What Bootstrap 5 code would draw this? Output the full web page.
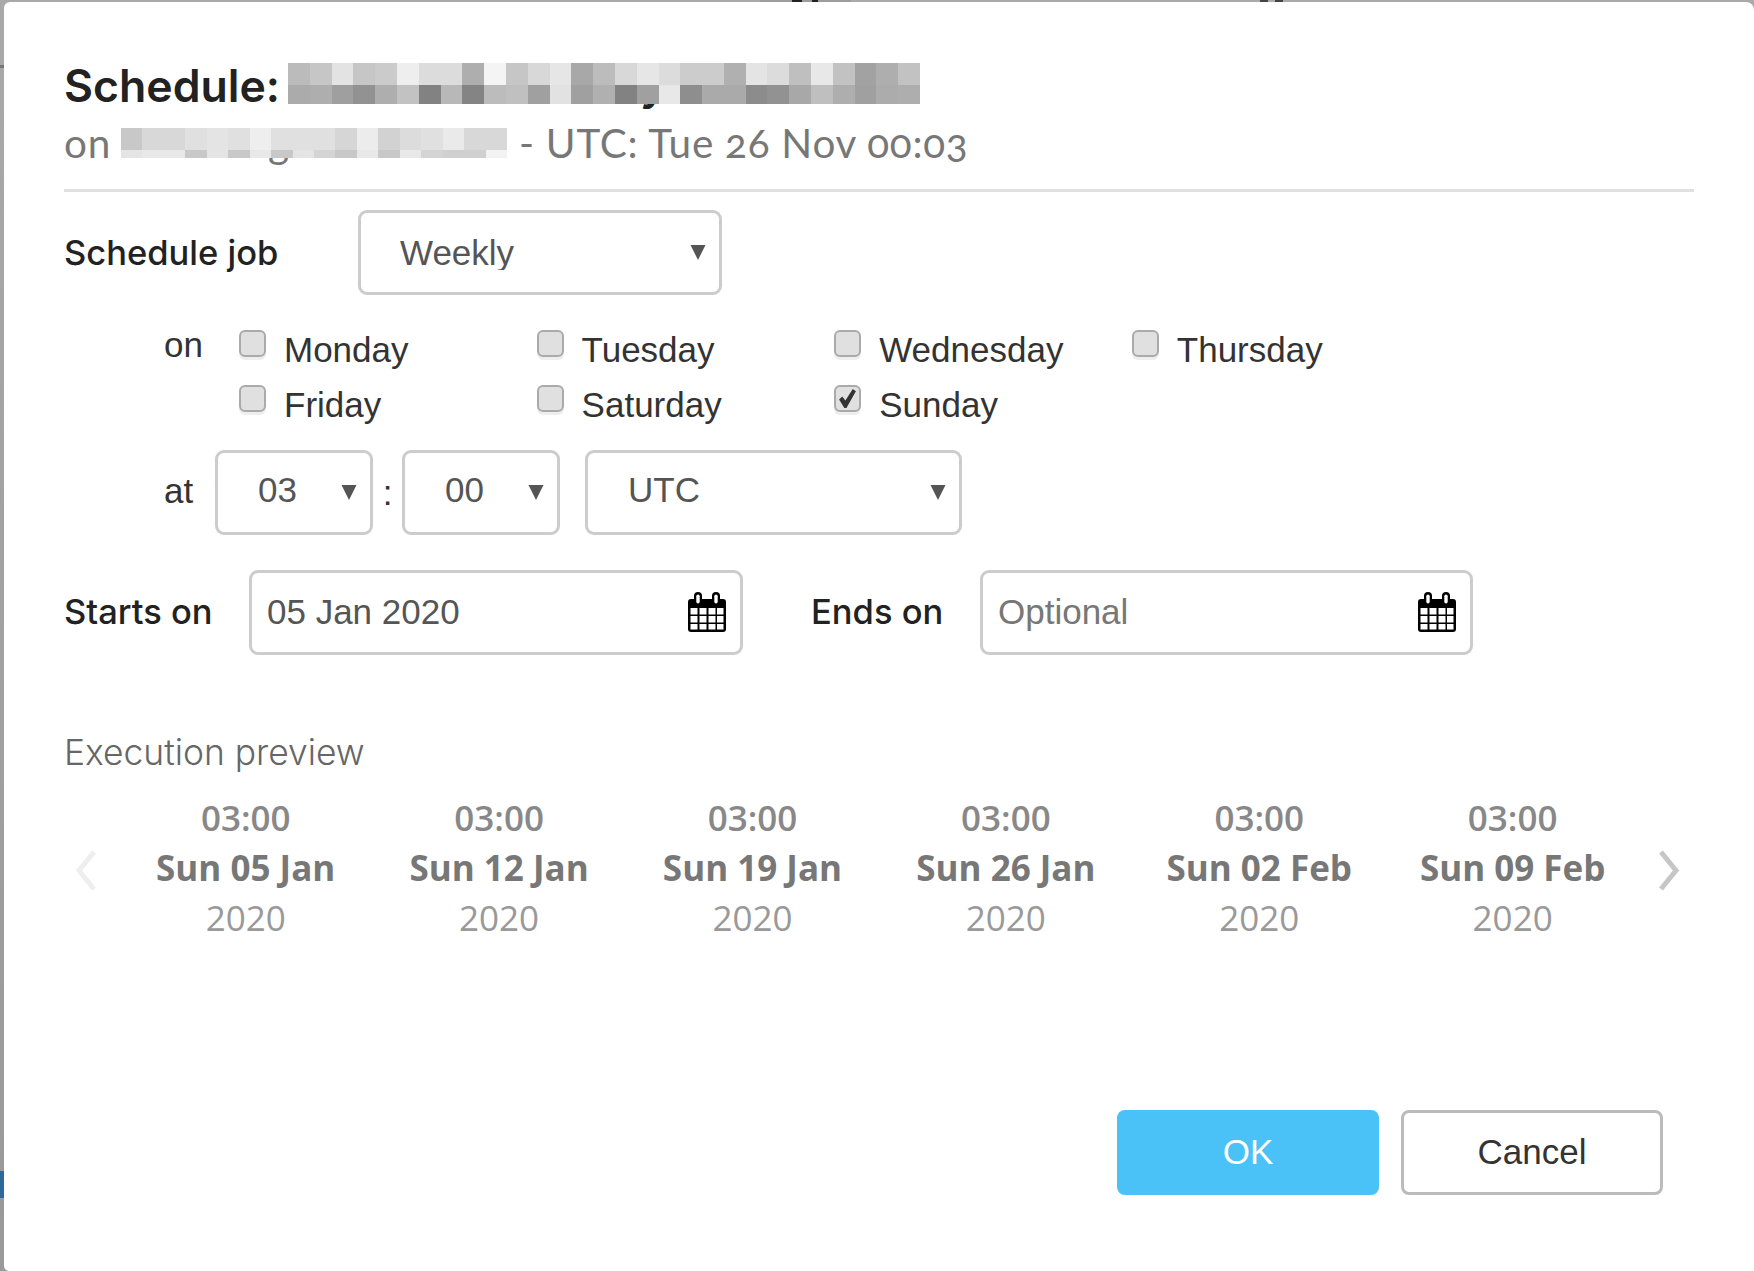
<!DOCTYPE html>
<html lang="en"><head><meta charset="utf-8"><title>Schedule</title>
<link href="https://cdn.jsdelivr.net/npm/bootstrap@5.3.0/dist/css/bootstrap.min.css" rel="stylesheet">
<style>
html,body{height:1271px;overflow:hidden}
body{font-family:"Liberation Sans",sans-serif;color:#333;background-color:#9a9a9a;background-repeat:no-repeat;
background-image:linear-gradient(#2b6a9b,#2b6a9b),linear-gradient(#777,#777),linear-gradient(90deg,#a9a9a9 760px,#9c9c9c 760px,#9c9c9c 792px,#222 792px,#222 802px,#9c9c9c 802px,#9c9c9c 812px,#222 812px,#222 818px,#9c9c9c 818px,#9c9c9c 851px,#a9a9a9 851px,#a9a9a9 1260px,#444 1260px,#444 1268px,#a9a9a9 1268px,#a9a9a9 1275px,#444 1275px,#444 1283px,#a9a9a9 1283px),linear-gradient(#a9a9a9,#999);
background-size:4px 27px,4px 3px,100% 2px,100% 100%;background-position:0 1171px,0 65px,0 0,0 0}
.sheet.modal-content{margin:2px 0 0 4px;height:1269px;width:1750px;border:0;border-radius:6px 8px 0 5px;padding:0 60px;display:block;background:#fff}
.head-font{font-family:Inter,Lato,sans-serif}
.title-line{display:flex;align-items:flex-start;height:59px;padding-top:60px;box-sizing:content-box;margin:0;font-size:44.6px;line-height:48px;font-weight:600;color:#222}
.sub-line{display:flex;font-family:Lato,sans-serif;font-size:40.5px;letter-spacing:.72px;line-height:44px;color:#777;height:68px;font-variant-numeric:oldstyle-nums}
.mosaic{display:grid;position:relative;flex:none;letter-spacing:0}
.mosaic>span{position:relative}
.mosaic-title{width:632px;height:41px;margin:1px 0 0 8px;grid-template-columns:repeat(29,1fr);grid-template-rows:22px 19px}
.mosaic-sub{width:386px;height:30px;margin:7px 12px 0 10px;grid-template-columns:repeat(18,1fr);grid-template-rows:22px 8px}
.mosaic>.tail{position:absolute;line-height:1;background:none}
.mosaic-title>.tail{left:352px;top:-1px}
.mosaic-sub>.tail{left:147px;top:-5px}
.rule{height:3px;background:#e0e0e0;margin:0}
.field-label{font-size:34.5px;color:#222;font-weight:500}
.sel.form-select,.date-box{border:3px solid #ccc;border-radius:9px;color:#555;font-size:35px;font-family:"Liberation Sans",sans-serif;box-shadow:none}
.sel.form-select{height:85px;padding:0 0 6px 40px;line-height:1;background-image:url("data:image/svg+xml,%3Csvg xmlns='http://www.w3.org/2000/svg' viewBox='0 0 16 16'%3E%3Cpath fill='%23555' d='M0 0h16L8 16z'/%3E%3C/svg%3E");background-size:16px 15px;background-position:right 13px center}
.sel.sel-job{width:364px;padding:0 0 0 39px}
.sel-num{width:158px}
.sel-tz{width:377px;margin-left:25px}
.job-row{margin-top:18px}
.job-label{width:294px}
.day-wrap{margin-top:35px;padding-left:100px}
.word{font-size:35px;color:#333;line-height:40px}
.day-word{width:75px;margin-top:-5px}
.day-grid{display:grid;grid-template-columns:repeat(4,297.6px);grid-auto-rows:55px}
.day.form-check{display:flex;padding:0;margin:0;min-height:0}
.day .form-check-input{float:none;margin:0 18px 0 0;width:27px;height:27px;flex:none;border:2px solid #aaa;border-radius:6px;background-color:#e0e0e0;box-shadow:0 3px 0 #eee}
.day .form-check-input:checked{background-color:#e0e0e0;border-color:#aaa;background-size:21px;background-image:url("data:image/svg+xml,%3Csvg xmlns='http://www.w3.org/2000/svg' viewBox='0 0 20 20'%3E%3Cpath fill='%23333' d='M2 11l3-3 3 4 7-11 3 2-9 16H7z'/%3E%3C/svg%3E")}
.day .form-check-label{font-size:35px;line-height:40px;color:#333;margin-top:0}
.time-row{margin-top:10px;padding-left:100px}
.at-word{width:51px;margin-top:-3px}
.colon{width:29px;text-align:center}
.date-row{margin-top:35px}
.date-box{height:85px;background:#fff;display:flex;align-items:center;padding-right:14px}
.date-box .form-control{border:0;box-shadow:none;font-size:35px;color:#555;padding:0 0 2px 15px;height:100%;background:transparent;font-family:"Liberation Sans",sans-serif}
.date-box .form-control::placeholder{color:#777;opacity:1}
.date-start{width:494px}
.date-end{width:493px}
.start-label{width:185px;margin-top:-2px}
.end-label{width:169px;margin-left:68px;margin-top:-2px}
.cal{width:38px;height:40px;flex:none;margin-top:-2px}
.preview-title{font-size:35.4px;line-height:40px;color:#666;margin-top:78px;font-weight:300}
.strip{display:flex;align-items:center;margin-top:20px;padding-left:11px}
.chev{width:22px;height:41px;flex:none;margin-top:4px}
.runs{display:grid;grid-template-columns:repeat(6,253.4px);margin:0 19px 0 22px;font-family:"Open Sans",sans-serif;font-size:35px;line-height:50px;text-align:center}
.run-time{font-weight:600;color:#888}
.run-day{font-weight:700;color:#777}
.run-year{color:#999}
.actions{display:flex;justify-content:flex-end;gap:22px;margin-top:167px;padding-right:31px}
.act.btn{width:262px;height:85px;font-size:35px;border-radius:8px;line-height:1;display:flex;align-items:center;justify-content:center;padding:0 0 2px}
.act-ok.btn{background:#4ac2f7;border:0;color:#fff}
.act-cancel.btn{background:#fff;border:3px solid #bbb;color:#333}
</style></head><body>
<div class="modal-content sheet">
 <h4 class="title-line head-font">Schedule:<span class="mosaic mosaic-title" id="m1"><span class="tail">y</span></span></h4>
 <div class="sub-line">on<span class="mosaic mosaic-sub" id="m2"><span class="tail">g</span></span>- UTC: Tue 26 Nov 00:03</div>
 <div class="rule"></div>
 <div class="d-flex align-items-center job-row"><label class="field-label head-font job-label">Schedule job</label>
  <select class="form-select sel sel-job"><option>Weekly</option></select></div>
 <div class="d-flex day-wrap"><div class="word day-word">on</div>
  <div class="day-grid">
   <div class="form-check day"><input class="form-check-input" type="checkbox" id="d1"><label class="form-check-label" for="d1">Monday</label></div>
   <div class="form-check day"><input class="form-check-input" type="checkbox" id="d2"><label class="form-check-label" for="d2">Tuesday</label></div>
   <div class="form-check day"><input class="form-check-input" type="checkbox" id="d3"><label class="form-check-label" for="d3">Wednesday</label></div>
   <div class="form-check day"><input class="form-check-input" type="checkbox" id="d4"><label class="form-check-label" for="d4">Thursday</label></div>
   <div class="form-check day"><input class="form-check-input" type="checkbox" id="d5"><label class="form-check-label" for="d5">Friday</label></div>
   <div class="form-check day"><input class="form-check-input" type="checkbox" id="d6"><label class="form-check-label" for="d6">Saturday</label></div>
   <div class="form-check day"><input class="form-check-input" type="checkbox" id="d7" checked><label class="form-check-label" for="d7">Sunday</label></div>
  </div></div>
 <div class="d-flex align-items-center time-row"><div class="word at-word">at</div>
  <select class="form-select sel sel-num"><option>03</option></select><div class="word colon">:</div>
  <select class="form-select sel sel-num"><option>00</option></select>
  <select class="form-select sel sel-tz"><option>UTC</option></select></div>
 <div class="d-flex align-items-center date-row">
  <label class="field-label head-font start-label">Starts on</label>
  <div class="date-box date-start"><input class="form-control" value="05 Jan 2020"><svg class="cal" viewBox="0 0 38 40"><use href="#calendar"/></svg></div>
  <label class="field-label head-font end-label">Ends on</label>
  <div class="date-box date-end"><input class="form-control" placeholder="Optional"><svg class="cal" viewBox="0 0 38 40"><use href="#calendar"/></svg></div>
 </div>
 <div class="preview-title head-font">Execution preview</div>
 <div class="strip">
  <svg class="chev" viewBox="0 0 22 41"><path fill="none" stroke="#eee" stroke-width="5" d="M19 2L4 20.5 19 39"/></svg>
  <div class="runs" id="runs"></div>
  <svg class="chev" viewBox="0 0 22 41"><path fill="none" stroke="#c6c6c6" stroke-width="5" d="M3 2l15 18.5L3 39"/></svg>
 </div>
 <div class="actions"><button class="btn act act-ok">OK</button><button class="btn act act-cancel">Cancel</button></div>
</div>
<svg width="0" height="0" class="d-block"><defs><g id="calendar"><rect y="7" width="38" height="33" rx="3"/><g fill="#fff"><rect x="2.5" y="16" width="7" height="6.5"/><rect x="11.5" y="16" width="7" height="6.5"/><rect x="20.5" y="16" width="7" height="6.5"/><rect x="29" y="16" width="6.5" height="6.5"/><rect x="2.5" y="24" width="7" height="6.5"/><rect x="11.5" y="24" width="7" height="6.5"/><rect x="20.5" y="24" width="7" height="6.5"/><rect x="29" y="24" width="6.5" height="6.5"/><rect x="2.5" y="32" width="7" height="5.5"/><rect x="11.5" y="32" width="7" height="5.5"/><rect x="20.5" y="32" width="7" height="5.5"/><rect x="29" y="32" width="6.5" height="5.5"/></g><rect x="6" width="8" height="14" rx="4"/><rect x="24" width="8" height="14" rx="4"/><rect x="8.3" y="2.5" width="3.4" height="9" rx="1.7" fill="#fff"/><rect x="26.3" y="2.5" width="3.4" height="9" rx="1.7" fill="#fff"/></g></defs></svg>
<script src="https://cdn.jsdelivr.net/npm/bootstrap@5.3.0/dist/js/bootstrap.bundle.min.js"></script>
<script>
function fill(id,rows){var el=document.getElementById(id);rows.forEach(function(r){r.forEach(function(v){var c=document.createElement('span');var h=v.toString(16);c.style.background='#'+h+h+h;el.appendChild(c);});});}
fill('m1',[[0xbb,0xc6,0xe3,0xc6,0xcb,0xee,0xdc,0xdc,0xae,0xf4,0xc6,0xd8,0xe6,0xa8,0xbc,0xd8,0xe6,0xdc,0xcc,0xcc,0xb0,0xe4,0xdc,0xbf,0xe8,0xc2,0xa2,0xae,0xc2],[0xab,0xae,0x9f,0x92,0xae,0xc2,0x82,0xb8,0x84,0xbc,0xc0,0xa0,0xe2,0xa0,0xb0,0x82,0xa0,0xe8,0x8e,0xaa,0xaa,0x8c,0x92,0xa8,0xbf,0xae,0xa0,0xac,0xae]]);
fill('m2',[[0xc8,0xd8,0xd8,0xe0,0xe4,0xe0,0xee,0xe0,0xe0,0xe0,0xd6,0xec,0xd2,0xdc,0xe0,0xea,0xd8,0xd8],[0xe4,0xe8,0xe8,0xc8,0xe4,0xc8,0xe8,0xc8,0xe4,0xd4,0xc8,0xe8,0xc8,0xe8,0xd4,0xd0,0xd0,0xf2]]);
var d=['Sun 05 Jan','Sun 12 Jan','Sun 19 Jan','Sun 26 Jan','Sun 02 Feb','Sun 09 Feb'],r=document.getElementById('runs');
d.forEach(function(x){r.insertAdjacentHTML('beforeend','<div><div class="run-time">03:00</div><div class="run-day">'+x+'</div><div class="run-year">2020</div></div>');});
</script>
</body></html>
